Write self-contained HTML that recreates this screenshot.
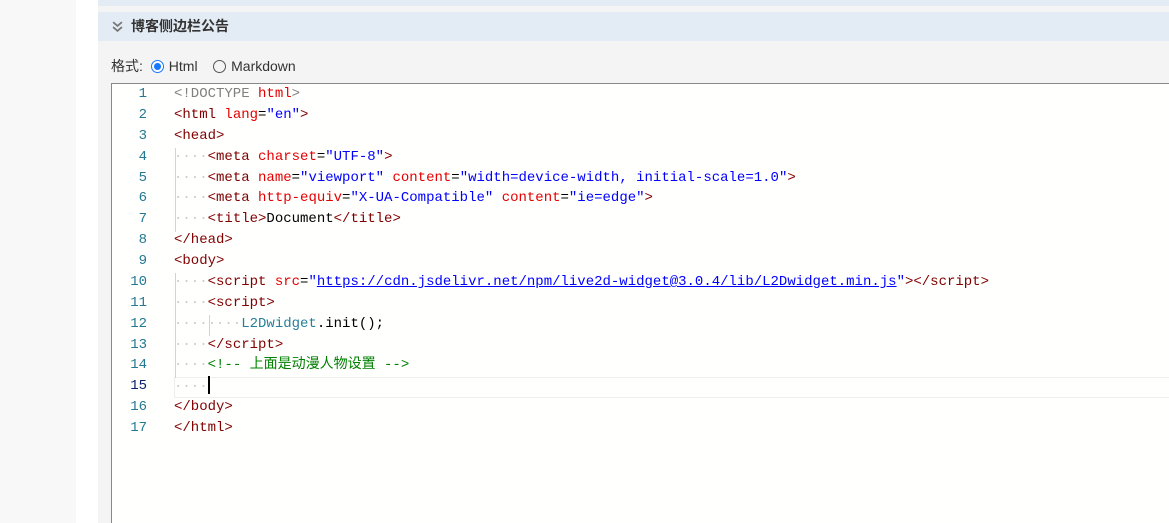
<!DOCTYPE html>
<html style="overflow:hidden"><head><style>
body{margin:0;width:1169px;height:523px;overflow:hidden;background:#fff;position:relative;font-family:"Liberation Sans","Noto Sans CJK SC",sans-serif}
.l{position:absolute;left:0;top:0;width:76px;height:523px;background:#f8f8f8}
.p{position:absolute;left:98px;top:0;right:0;height:523px;background:#f4f4f4}
.tb{position:absolute;left:98px;right:0;top:0;height:6px;background:#e3ebf5}
.hd{position:absolute;left:98px;right:0;top:12px;height:29px;background:#e3ebf5;font-size:14px;font-weight:bold;color:#333;line-height:29px}
.hd span{position:absolute;left:33px}
.fmt{position:absolute;left:111px;top:57px;font-size:14px;color:#333;line-height:18px}
.rad{display:inline-block;width:13px;height:13px;border:1px solid #555;border-radius:50%;vertical-align:-2px;margin-right:5px;box-sizing:border-box}
.rad.on{border:1px solid #1677ff;background:radial-gradient(#1677ff 3.2px,#fff 3.8px)}
.ed{position:absolute;left:111px;top:83px;right:-2px;height:460px;background:#fffffe;border:1px solid #888;font-family:"Liberation Mono","Noto Sans CJK SC",monospace;font-size:14px}
.ln{position:absolute;left:0;width:35px;text-align:right;color:#237893}
.c{position:absolute;left:62px;white-space:pre;color:#000}
.row{position:absolute;left:0;right:0;height:21px;line-height:21px}
.t{color:#800000}.a{color:#e50000}.v{color:#0000ff}.g{color:#808080}.cm{color:#008000}.f{color:#267f99}
.d{color:#ccc}
.cur{position:absolute;left:62px;right:0;top:293px;height:19px;border:1px solid #eee}
.guide{position:absolute;width:1px;background:#d3d3d3}
</style></head><body>
<div class="l"></div><div class="p"></div><div class="tb"></div>
<div class="hd"><svg style="position:absolute;left:14px;top:9px" width="11" height="11" viewBox="0 0 10 10"><path d="M1 1l4 3.5 4-3.5M1 5.5l4 3.5 4-3.5" fill="none" stroke="#777" stroke-width="1.6"/></svg><span>博客侧边栏公告</span></div>
<div class="fmt">格式: <span class="rad on" style="margin-left:4px"></span>Html &nbsp;&nbsp; <span class="rad"></span>Markdown</div>
<div class="ed">
<div class="cur"></div>
<div class="guide" style="left:63px;top:64px;height:84px"></div>
<div class="guide" style="left:63px;top:189px;height:105px"></div>
<div class="guide" style="left:97px;top:231px;height:21px"></div>
<div class="row" style="top:0"><span class="ln">1</span><span class="c"><span class="g">&lt;!DOCTYPE </span><span class="a">html</span><span class="g">&gt;</span></span></div>
<div class="row" style="top:21px"><span class="ln">2</span><span class="c"><span class="t">&lt;html</span> <span class="a">lang</span>=<span class="v">"en"</span><span class="t">&gt;</span></span></div>
<div class="row" style="top:42px"><span class="ln">3</span><span class="c"><span class="t">&lt;head&gt;</span></span></div>
<div class="row" style="top:63px"><span class="ln">4</span><span class="c"><span class="d">····</span><span class="t">&lt;meta</span> <span class="a">charset</span>=<span class="v">"UTF-8"</span><span class="t">&gt;</span></span></div>
<div class="row" style="top:84px"><span class="ln">5</span><span class="c"><span class="d">····</span><span class="t">&lt;meta</span> <span class="a">name</span>=<span class="v">"viewport"</span> <span class="a">content</span>=<span class="v">"width=device-width, initial-scale=1.0"</span><span class="t">&gt;</span></span></div>
<div class="row" style="top:104px"><span class="ln">6</span><span class="c"><span class="d">····</span><span class="t">&lt;meta</span> <span class="a">http-equiv</span>=<span class="v">"X-UA-Compatible"</span> <span class="a">content</span>=<span class="v">"ie=edge"</span><span class="t">&gt;</span></span></div>
<div class="row" style="top:125px"><span class="ln">7</span><span class="c"><span class="d">····</span><span class="t">&lt;title&gt;</span>Document<span class="t">&lt;/title&gt;</span></span></div>
<div class="row" style="top:146px"><span class="ln">8</span><span class="c"><span class="t">&lt;/head&gt;</span></span></div>
<div class="row" style="top:167px"><span class="ln">9</span><span class="c"><span class="t">&lt;body&gt;</span></span></div>
<div class="row" style="top:188px"><span class="ln">10</span><span class="c"><span class="d">····</span><span class="t">&lt;script</span> <span class="a">src</span>=<span class="v">"<u>https://cdn.jsdelivr.net/npm/live2d-widget@3.0.4/lib/L2Dwidget.min.js</u>"</span><span class="t">&gt;&lt;/script&gt;</span></span></div>
<div class="row" style="top:209px"><span class="ln">11</span><span class="c"><span class="d">····</span><span class="t">&lt;script&gt;</span></span></div>
<div class="row" style="top:230px"><span class="ln">12</span><span class="c"><span class="d">········</span><span class="f">L2Dwidget</span>.init();</span></div>
<div class="row" style="top:251px"><span class="ln">13</span><span class="c"><span class="d">····</span><span class="t">&lt;/script&gt;</span></span></div>
<div class="row" style="top:271px"><span class="ln">14</span><span class="c"><span class="d">····</span><span class="cm">&lt;!-- 上面是动漫人物设置 --&gt;</span></span></div>
<div class="row" style="top:292px"><span class="ln" style="color:#0b216f">15</span><span class="c"><span class="d">····</span><span style="display:inline-block;width:2px;height:18px;background:#000;vertical-align:-4px"></span></span></div>
<div class="row" style="top:313px"><span class="ln">16</span><span class="c"><span class="t">&lt;/body&gt;</span></span></div>
<div class="row" style="top:334px"><span class="ln">17</span><span class="c"><span class="t">&lt;/html&gt;</span></span></div>
</div>
</body></html>
